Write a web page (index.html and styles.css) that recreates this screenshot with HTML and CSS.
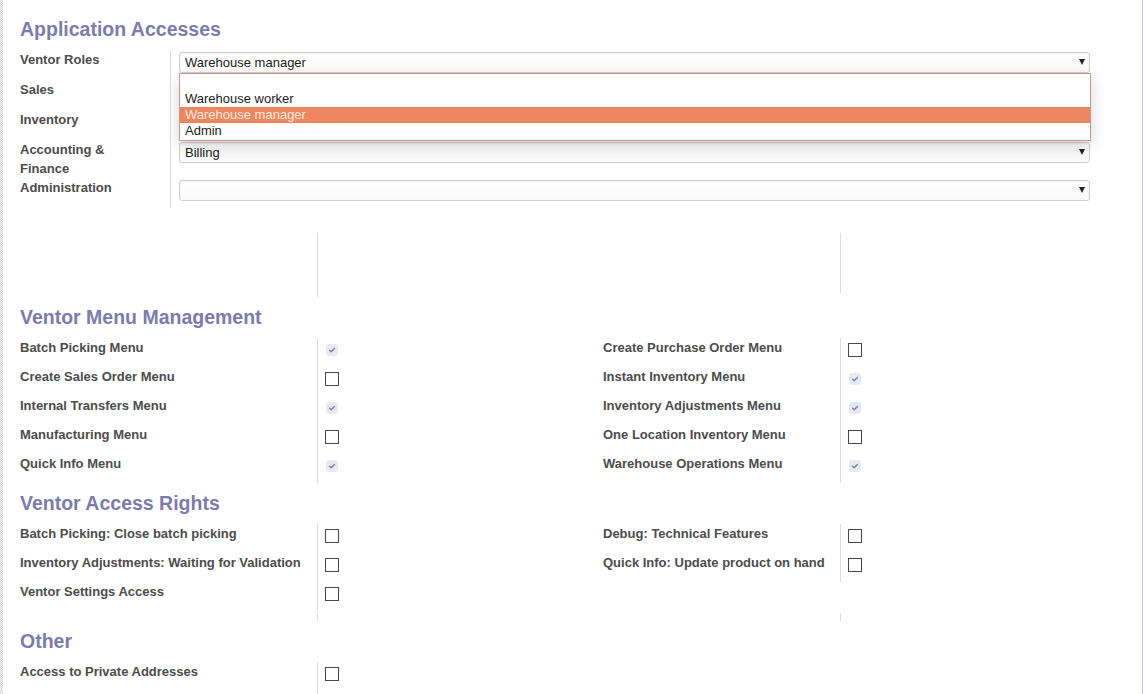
FILE: index.html
```html
<!DOCTYPE html>
<html>
<head>
<meta charset="utf-8">
<link rel="stylesheet" href="styles.css">
</head>
<body>
<div class="screen">
  <div class="strip"></div>
  <main class="sheet">
    <h2 class="sep">Application Accesses</h2>
    <div class="app-group">
      <div class="lbl">Ventor Roles</div>
      <div class="fld">
        <div class="select">Warehouse manager<span class="caret"></span>
          <div class="dropdown">
            <div class="opt"></div>
            <div class="opt">Warehouse worker</div>
            <div class="opt active">Warehouse manager</div>
            <div class="opt">Admin</div>
          </div>
        </div>
      </div>
      <div class="lbl">Sales</div>
      <div class="fld"><div class="select"><span class="caret"></span></div></div>
      <div class="lbl">Inventory</div>
      <div class="fld"><div class="select"><span class="caret"></span></div></div>
      <div class="lbl">Accounting &amp; Finance</div>
      <div class="fld"><div class="select">Billing<span class="caret"></span></div></div>
      <div class="lbl">Administration</div>
      <div class="fld"><div class="select"><span class="caret"></span></div></div>
    </div>

    <div class="cols spacer">
      <div class="group g-left"><div></div><div class="cell h64"></div></div>
      <div class="group g-right"><div></div><div class="cell h60"></div></div>
    </div>

    <h2 class="sep">Ventor Menu Management</h2>
    <div class="cols">
      <div class="group g-left">
        <div class="lbl row">Batch Picking Menu</div><div class="cell"><span class="cb on"><svg viewBox="0 0 12 12" width="12" height="12"><path d="M3.6 6.3 L5.2 7.7 L8.4 4.6" fill="none" stroke="#7c7bad" stroke-width="1.4" stroke-linecap="round" stroke-linejoin="round"/></svg></span></div>
        <div class="lbl row">Create Sales Order Menu</div><div class="cell"><span class="cb off"></span></div>
        <div class="lbl row">Internal Transfers Menu</div><div class="cell"><span class="cb on"><svg viewBox="0 0 12 12" width="12" height="12"><path d="M3.6 6.3 L5.2 7.7 L8.4 4.6" fill="none" stroke="#7c7bad" stroke-width="1.4" stroke-linecap="round" stroke-linejoin="round"/></svg></span></div>
        <div class="lbl row">Manufacturing Menu</div><div class="cell"><span class="cb off"></span></div>
        <div class="lbl row">Quick Info Menu</div><div class="cell"><span class="cb on"><svg viewBox="0 0 12 12" width="12" height="12"><path d="M3.6 6.3 L5.2 7.7 L8.4 4.6" fill="none" stroke="#7c7bad" stroke-width="1.4" stroke-linecap="round" stroke-linejoin="round"/></svg></span></div>
      </div>
      <div class="group g-right">
        <div class="lbl row">Create Purchase Order Menu</div><div class="cell"><span class="cb off"></span></div>
        <div class="lbl row">Instant Inventory Menu</div><div class="cell"><span class="cb on"><svg viewBox="0 0 12 12" width="12" height="12"><path d="M3.6 6.3 L5.2 7.7 L8.4 4.6" fill="none" stroke="#7c7bad" stroke-width="1.4" stroke-linecap="round" stroke-linejoin="round"/></svg></span></div>
        <div class="lbl row">Inventory Adjustments Menu</div><div class="cell"><span class="cb on"><svg viewBox="0 0 12 12" width="12" height="12"><path d="M3.6 6.3 L5.2 7.7 L8.4 4.6" fill="none" stroke="#7c7bad" stroke-width="1.4" stroke-linecap="round" stroke-linejoin="round"/></svg></span></div>
        <div class="lbl row">One Location Inventory Menu</div><div class="cell"><span class="cb off"></span></div>
        <div class="lbl row">Warehouse Operations Menu</div><div class="cell"><span class="cb on"><svg viewBox="0 0 12 12" width="12" height="12"><path d="M3.6 6.3 L5.2 7.7 L8.4 4.6" fill="none" stroke="#7c7bad" stroke-width="1.4" stroke-linecap="round" stroke-linejoin="round"/></svg></span></div>
      </div>
    </div>

    <h2 class="sep">Ventor Access Rights</h2>
    <div class="cols">
      <div class="group g-left">
        <div class="lbl row">Batch Picking: Close batch picking</div><div class="cell"><span class="cb off"></span></div>
        <div class="lbl row">Inventory Adjustments: Waiting for Validation</div><div class="cell"><span class="cb off"></span></div>
        <div class="lbl row">Ventor Settings Access</div><div class="cell"><span class="cb off"></span></div>
      </div>
      <div class="group g-right">
        <div class="lbl row">Debug: Technical Features</div><div class="cell"><span class="cb off"></span></div>
        <div class="lbl row">Quick Info: Update product on hand</div><div class="cell"><span class="cb off"></span></div>
      </div>
    </div>
    <div class="cols tail">
      <div class="group g-left"><div></div><div class="cell h8"></div></div>
      <div class="group g-right"><div></div><div class="cell h8"></div></div>
    </div>

    <h2 class="sep">Other</h2>
    <div class="cols">
      <div class="group g-left">
        <div class="lbl row">Access to Private Addresses</div><div class="cell tall"><span class="cb off"></span></div>
      </div>
      <div class="group g-right"></div>
    </div>
  </main>
</div>
</body>
</html>
```

FILE: styles.css
```css
html, body {
  margin: 0;
  padding: 0;
  background: #fff;
}
body {
  font-family: "Liberation Sans", Arial, sans-serif;
  height: 694px;
  overflow: hidden;
}
.screen {
  display: flex;
  height: 694px;
}
.strip {
  width: 3px;
  flex: none;
  background-color: #f3f3f3;
  background-image: conic-gradient(#d9d9d9 25%, #f3f3f3 0 50%, #d9d9d9 0 75%, #f3f3f3 0);
  background-size: 2px 2px;
}
.sheet {
  flex: 1;
  padding: 17px 0 0 17px;
  border-right: 1px solid #c9c7da;
  overflow: hidden;
}
.sep {
  margin: 0;
  font-size: 19.5px;
  line-height: 24px;
  font-weight: bold;
  color: #7c7bad;
}
.lbl {
  font-size: 13px;
  line-height: 19px;
  font-weight: bold;
  color: #4c4c4c;
}
.app-group {
  display: grid;
  grid-template-columns: 150px 941px;
  margin-top: 9px;
}
.app-group .lbl {
  padding-right: 22px;
}
.app-group .fld {
  border-left: 1px solid #dcdcdc;
  padding: 2px 0 7px 8px;
}
.select {
  position: relative;
  box-sizing: border-box;
  width: 911px;
  height: 21px;
  border: 1px solid #cfcfcf;
  border-radius: 3px;
  padding-left: 5px;
  font-size: 13px;
  line-height: 19px;
  color: #222;
  background: linear-gradient(#fff, #fafafa);
  box-shadow: inset 0 1px 2px rgba(0, 0, 0, 0.06);
}
.caret {
  position: absolute;
  right: 4px;
  top: 6px;
  width: 0;
  height: 0;
  border-left: 3.5px solid transparent;
  border-right: 3.5px solid transparent;
  border-top: 6px solid #222;
}
.dropdown {
  position: absolute;
  left: -1px;
  top: 20px;
  z-index: 5;
  box-sizing: border-box;
  width: 912px;
  padding: 1px 0;
  border: 1px solid #c39a8c;
  background: #fff;
  box-shadow: 0 6px 14px rgba(0, 0, 0, 0.16);
}
.opt {
  height: 16px;
  line-height: 16px;
  padding-left: 5px;
  font-size: 13px;
  color: #222;
}
.opt.active {
  background: #ee875f;
  color: #fde8df;
}
.cols {
  display: grid;
  grid-template-columns: 583px 517px;
  margin-top: 9px;
  margin-bottom: 8px;
}
.cols.spacer {
  margin-top: 25px;
}
.cols.tail {
  margin-top: -6px;
}
.group {
  display: grid;
  align-content: start;
}
.g-left {
  grid-template-columns: 297px 1fr;
}
.g-right {
  grid-template-columns: 237px 1fr;
}
.row {
  height: 29px;
}
.cell {
  box-sizing: border-box;
  height: 29px;
  border-left: 1px solid #dcdcdc;
  padding-left: 7px;
}
.cell.h64 { height: 64px; }
.cell.h60 { height: 60px; }
.cell.h8 { height: 8px; }
.cell.tall { height: 40px; }
.cb {
  display: block;
  box-sizing: border-box;
}
.cb.off {
  width: 14px;
  height: 14px;
  margin-top: 5px;
  border: 1px solid #464646;
  background: #fff;
}
.cb.on {
  width: 12px;
  height: 12px;
  margin: 6px 0 0 1px;
  border-radius: 3px;
  background: #e8e8f0;
}
.cb.on svg {
  display: block;
}
```
